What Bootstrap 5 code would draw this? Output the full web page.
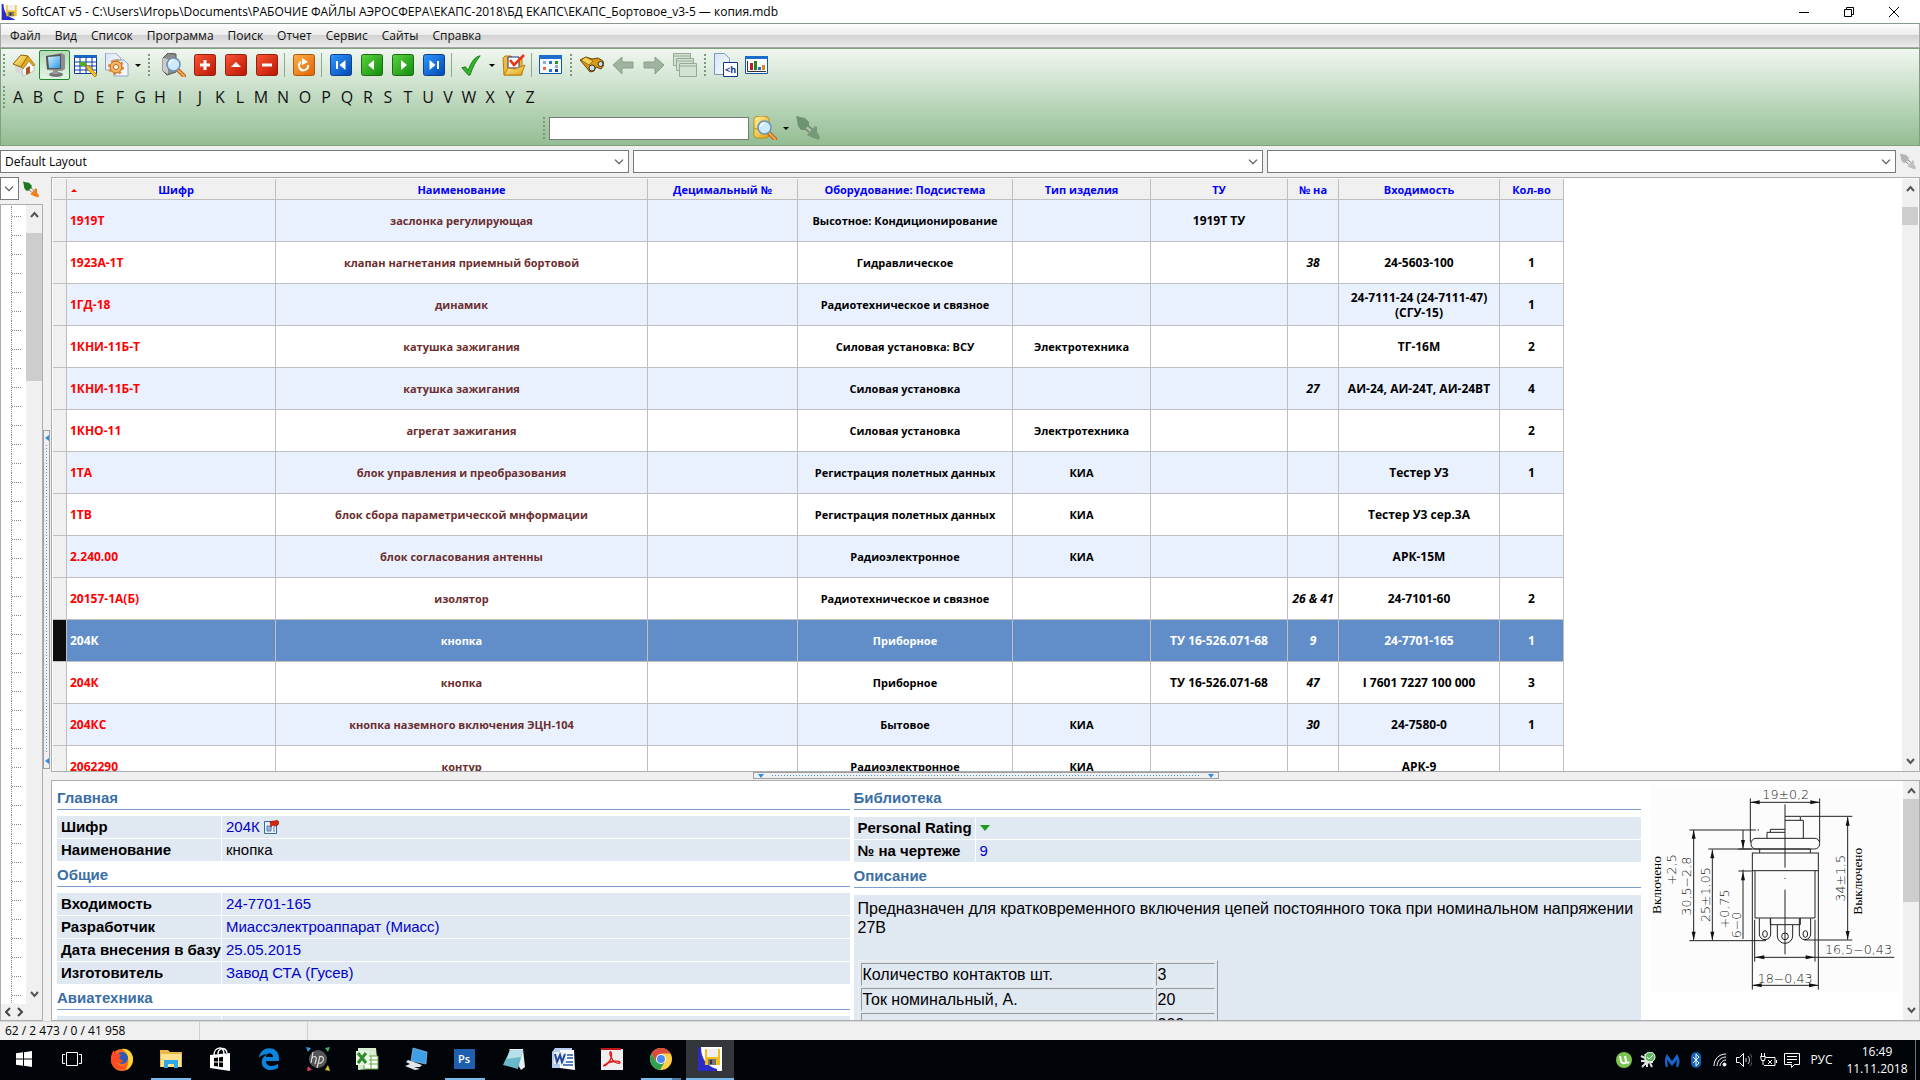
<!DOCTYPE html>
<html lang="ru">
<head>
<meta charset="utf-8">
<meta name="viewport" content="width=device-width, initial-scale=1">
<title>SoftCAT v5</title>
<link href="https://cdn.jsdelivr.net/npm/bootstrap@5.3.0/dist/css/bootstrap.min.css" rel="stylesheet">
<style>
:root{--line:#bfbfbf;--face:#f0f0f0;--edge:#abadb3;--ui:"Open Sans","Noto Sans",sans-serif;--doc:"Liberation Sans",Arial,sans-serif}
body{font:12px/16px var(--ui);color:#000;background:var(--face)}
button{font:inherit;color:inherit;background:none;border:0;padding:0}
a{text-decoration:none;color:inherit}
svg{display:block;flex:none}
.titlebar{height:23px;background:#fff}
.titlebar .winbtn{width:45px;height:22px}
.menubar{height:25px;border:1px solid #a5a8a5;border-top-color:#8b9a8b;background:linear-gradient(#fdfdfd 0,#ececec 48%,#d2d2d2 49%,#ececec 100%);padding-left:2px}
.menubar .nav-link{color:#111;padding:0 7px;line-height:23px}
.tools{height:98px;padding-top:1px;border:1px solid #7f9f7f;background:linear-gradient(#f0f7f0,#93bd93)}
.tbtn{width:31px;height:30px;display:flex;align-items:center;justify-content:center;border:1px solid transparent;border-radius:2px;flex:none}
.tbtn.on{border-color:#1f8a2d;background:linear-gradient(#b5dcb8,#e3f4e4)}
.drop{width:12px;display:flex;justify-content:center}
.drop::after{content:"";border:3px solid transparent;border-top-color:#000;border-bottom:0}
.grip{width:10px;height:22px;flex:none;background:repeating-linear-gradient(#7d977d 0 2px,transparent 2px 4px) 4px 0/2px 100% no-repeat}
.grip.lead-in{width:7px;background-position:2px 0}
.vsep{width:6px;height:24px;flex:none;background:linear-gradient(#93a893,#93a893) 2px 0/1px 100% no-repeat}
.abc{padding-top:5px}
.abc button{width:20px;font-size:16px;line-height:24px;color:#111}
.abc .wide{width:22px}
.finder{padding:4px 0 0 538px}
.find{width:200px;height:23px;border:1px solid #7a7a7a;border-radius:0;padding:0 4px;font-size:12px}
.combo{height:23px;min-height:0;border:1px solid #7a7a7a;border-radius:0;padding:0 20px 0 4px;font:12px/20px var(--ui);color:#000;background-color:#fff;background-size:10px 6px;background-position:right 4px center;background-image:url("data:image/svg+xml,%3Csvg xmlns='http://www.w3.org/2000/svg' viewBox='0 0 10 6'%3E%3Cpath d='M1 .7l4 4 4-4' fill='none' stroke='%23555' stroke-width='1.2'/%3E%3C/svg%3E")}
.combo.mini{width:19px;padding:0}
.framed{border:1px solid var(--edge);background:#fff}
main{min-height:0;flex:1 1 0}
.side{width:43px;flex:none}
.sb{width:16px;background:var(--face);flex:none}
.sb .thumb{background:#cdcdcd}
.sb .up{margin:4px auto 12px}
.sb .up.near{margin-bottom:2px}
.sb .down{margin:auto auto 4px}
.split-v{width:8px;padding:0 1px 0 0;flex:none}
.split-v div{width:7px;height:339px;border:1px solid #a0a0a0}
.split-h{height:8px;flex:none}
.split-h div{width:466px;height:7px;border:1px solid #a0a0a0;padding:0 4px}
.dots{height:1px;background:repeating-linear-gradient(90deg,#3d97ee 0 1px,transparent 1px 3px)}
.dots-v{width:1px;background:repeating-linear-gradient(#3d97ee 0 1px,transparent 1px 3px)}
.gridbox{padding:1px 1px 0}
.catalog{table-layout:fixed;width:1511px;border-collapse:separate;border-spacing:0;font:700 12px/15px var(--ui);text-align:center}
.catalog th,.catalog td{border:0 solid var(--line);border-width:0 1px 1px 0;padding:0 4px;overflow:hidden;white-space:nowrap}
.catalog th{height:21px;background:var(--face);color:#00f;font-size:11px;text-align:center}
.catalog td{height:42px}
.catalog tbody tr:nth-child(odd){background:#eaf1fe}
.catalog tr td:first-child{background:var(--face)}
.catalog td:nth-child(2){color:#f00;text-align:left;padding-left:3px}
.catalog td:nth-child(3){color:#6b2e2e}
.catalog td:nth-child(3),.catalog td:nth-child(5),.catalog td:nth-child(6){font-size:11px}
.catalog td:nth-child(8){font-style:italic;padding:0}
.catalog tbody tr.sel{background:#618ec9}
.catalog tr.sel td,.catalog tr.sel td:nth-child(2),.catalog tr.sel td:nth-child(3){color:#fff}
.catalog tr.sel td:first-child{background:#0d0d0d}
.sortup{float:left;border:3px solid transparent;border-bottom-color:#f00;border-top:0;margin:7px 4px 0 0}
.details{height:241px;font:15px/22px var(--doc);padding-left:5px}
.details h2{font:bold 15px/20px var(--doc);color:#3a6ea5;border-bottom:1px solid #7b9fcb;margin:0 0 6px;height:25px;padding-top:3px}
.details h2:first-child{height:25px}
.details .right h2{margin-bottom:7px}
.props{table-layout:fixed;width:100%;border-collapse:separate;border-spacing:0}
.props th,.props td{background:#e0e8f2;height:23px;padding:0 0 0 4px;border-bottom:1px solid #fff;line-height:22px;white-space:nowrap}
.props th{width:165px;border-right:1px solid #fff}
.props.narrow th{width:122px}
.props a{color:#0000c8}
.about{background:#e0e8f2;font:16px/19px var(--doc);padding:4px 4px 0;height:200px}
.specs{margin-top:23px;border:1px solid;border-color:#eee #999 #999 #eee;border-collapse:separate;border-spacing:2px;width:360px}
.specs td{border:1px solid;border-color:#999 #eee #eee #999;height:23px;padding:1px}
.status{height:19px;border-top:1px solid #d7d7d7;padding-left:5px;line-height:18px}
.status span+span{border-left:1px solid #d0d0d0}
.taskbar{height:40px;background:#010409;color:#fff}
.task{width:48px;height:40px;display:flex;align-items:center;justify-content:center;border-bottom:2px solid transparent;margin-left:1px;position:relative}
.task.open::after{content:"";position:absolute;left:4px;right:4px;bottom:-2px;height:2px;background:#76b9ed}
.task.two::after{background:linear-gradient(90deg,#76b9ed 31px,#4f7fa8 31px)}
.task.cur{background:#33373b;border-color:#76b9ed}
.task.sys{margin:0}
.task.sys+.task.sys{margin-right:1px}
.tray{padding-right:4px}
.tray button{width:24px;display:flex;justify-content:center}
.lang{width:35px}
.clock{width:76px;text-align:center;line-height:17px}
</style>
<script src="https://cdn.jsdelivr.net/npm/bootstrap@5.3.0/dist/js/bootstrap.bundle.min.js"></script>
</head>
<body class="d-flex flex-column vh-100 overflow-hidden">
<svg width="0" height="0" class="position-absolute" aria-hidden="true">
<defs>
<linearGradient id="gr" x1="0" y1="0" x2="1" y2="1"><stop offset="0" stop-color="#ff5436"/><stop offset="1" stop-color="#b81500"/></linearGradient>
<linearGradient id="gb" x1="0" y1="0" x2="1" y2="1"><stop offset="0" stop-color="#2f97ff"/><stop offset="1" stop-color="#0048b4"/></linearGradient>
<linearGradient id="gg" x1="0" y1="0" x2="1" y2="1"><stop offset="0" stop-color="#5bd53f"/><stop offset="1" stop-color="#128a0e"/></linearGradient>
<linearGradient id="go" x1="0" y1="0" x2="1" y2="1"><stop offset="0" stop-color="#ffb04a"/><stop offset="1" stop-color="#e06200"/></linearGradient>
<linearGradient id="gy" x1="0" y1="0" x2="1" y2="1"><stop offset="0" stop-color="#fff3a0"/><stop offset="1" stop-color="#e0a010"/></linearGradient>
<linearGradient id="gs" x1="0" y1="0" x2="1" y2="1"><stop offset="0" stop-color="#d6f1ff"/><stop offset="1" stop-color="#2d9be8"/></linearGradient>
<linearGradient id="gp" x1="0" y1="0" x2="1" y2="1"><stop offset="0" stop-color="#d5e2f7"/><stop offset="1" stop-color="#fff"/></linearGradient>
<symbol id="plug" viewBox="0 0 24 24"><path d="M11 9l5 4M8 12l5 4" stroke="#777" stroke-width="1.400"/><path d="M0 0l4 1 5 1 4 4 0 3-5 5-3 0-3-4-1-6z" fill="var(--a)"/><path d="M11 19l8-9 2 1 0 5 3 5-1 3-6-2z" fill="var(--b)"/></symbol>
<symbol id="lens" viewBox="0 0 24 24"><path d="M15 16l7 7" stroke="#b65a12" stroke-width="4" stroke-linecap="round"/><path d="M15 16l7 7" stroke="#f7a44c" stroke-width="2.400" stroke-linecap="round"/><circle cx="11.500" cy="11.500" r="6.500" fill="#cdeafd" stroke="#6e94b8" stroke-width="1.600"/><path d="M7.500 11a4 4 0 0 1 4-4" stroke="#fff" stroke-width="1.600" fill="none"/></symbol>
<symbol id="cat" viewBox="0 0 24 24"><path fill="#fff" d="M0 0h24v24H0z"/><path fill="#2b2bc8" d="M0 0h3c0 11 5 19 16 22v2H0z"/><path fill="#f5bd1c" d="M7 2h15v16H7z"/><path fill="#eee" d="M9 2h11v8H9z"/><path fill="#777" d="M10 12h8v6h-8z"/><path fill="#333" d="M12 13h2v4h-2z"/></symbol>
</defs></svg>

<header class="titlebar d-flex align-items-center flex-shrink-0">
<svg class="me-1" width="18" height="18" viewBox="-2 0 26 24"><use href="#cat" width="24" height="24"/></svg>
<span class="flex-grow-1">SoftCAT v5 - C:\Users\Игорь\Documents\РАБОЧИЕ ФАЙЛЫ АЭРОСФЕРА\ЕКАПС-2018\БД ЕКАПС\ЕКАПС_Бортовое_v3-5 — копия.mdb</span>
<button class="winbtn" aria-label="Свернуть"><svg class="mx-auto" width="10" height="10"><path d="M0 5.500h10" stroke="#000"/></svg></button>
<button class="winbtn" aria-label="Восстановить"><svg class="mx-auto" width="10" height="10" fill="none" stroke="#000"><path d="M.5 2.500h7v7h-7zM2.500 2V.5h7v7H8"/></svg></button>
<button class="winbtn me-1" aria-label="Закрыть"><svg class="mx-auto" width="10" height="10"><path d="M0 0l10 10M10 0L0 10" stroke="#000"/></svg></button>
</header>

<nav class="menubar nav flex-nowrap flex-shrink-0">
<a class="nav-link" href="#">Файл</a><a class="nav-link" href="#">Вид</a><a class="nav-link" href="#">Список</a><a class="nav-link" href="#">Программа</a><a class="nav-link" href="#">Поиск</a><a class="nav-link" href="#">Отчет</a><a class="nav-link" href="#">Сервис</a><a class="nav-link" href="#">Сайты</a><a class="nav-link" href="#">Справка</a>
</nav>

<div class="tools flex-shrink-0">
<div class="d-flex align-items-center">
<span class="grip lead-in"></span>
<button class="tbtn" aria-label="Домой"><svg width="24" height="24" viewBox="0 0 24 24"><path d="M3 12l8 3v8l-7-4z" fill="#d8d8d8"/><path d="M10 14l7-7 5 6v5l-11 5z" fill="#fafafa" stroke="#999" stroke-width=".5"/><path d="M1 11L9 2l7 1-7 11z" fill="url(#gy)" stroke="#8a6200"/><path d="M9 14l7-11 7 9-2 1-4-5-6 8z" fill="#e5a91a" stroke="#8a6200" stroke-width=".6"/><path d="M14 15l4-2v7l-4 2z" fill="#a45a22"/></svg></button>
<button class="tbtn on" aria-label="Экран"><svg width="24" height="24" viewBox="0 0 24 24"><ellipse cx="13" cy="21.500" rx="7" ry="2.500" fill="#777"/><path d="M10 16h5v5h-5z" fill="#999"/><path d="M3 3l16-3 3 2v14l-3 2-15-1z" fill="#8d8d8d"/><path d="M3 3l15-2v15l-14 0z" fill="#555"/><path d="M5 4l12-1v12l-11 0z" fill="url(#gs)"/></svg></button>
<button class="tbtn" aria-label="Таблица"><svg width="24" height="24" viewBox="0 0 24 24"><path fill="#fff" stroke="#0b3d9b" d="M.5 2.500h22v18H.5z"/><path fill="#1a66c8" d="M0 2h23v3H0z"/><path d="M0 9h23M0 13h23M0 17h23M6 4v16M12 4v16M18 4v16" stroke="#0b3d9b"/><path fill="#4caf20" d="M6 9h6v4H6z"/><path d="M12 12l3 1 8 9-2 2-8-8z" fill="#f4c025" stroke="#8f6a00" stroke-width=".7"/></svg></button>
<button class="tbtn" aria-label="Настройки"><svg width="24" height="24" viewBox="0 0 24 24"><path d="M.5 0h10l5 5v12H.5z" fill="url(#gp)" stroke="#8ba4cc"/><path d="M9 7h10l4 4v12H9z" fill="url(#gp)" stroke="#8ba4cc"/><circle cx="11" cy="14" r="6" fill="#f8b461" stroke="#ba6416"/><circle cx="11" cy="14" r="7" fill="none" stroke="#dd8a2e" stroke-width="2" stroke-dasharray="2.700 2.800"/><circle cx="11" cy="14" r="2.500" fill="#fff" stroke="#ba6416"/></svg></button><button class="drop" aria-label="Ещё"></button>
<span class="grip me-1"></span>
<button class="tbtn" aria-label="Найти"><svg width="24" height="24" viewBox="0 0 24 24"><path d="M1 5l5-5 8 1v18l-9 3-4-4z" fill="#8b8b8b" stroke="#555"/><path d="M1 5l5 1v15l-5-3z" fill="#ccc"/><use href="#lens" width="24" height="24"/></svg></button>
<button class="tbtn" aria-label="Добавить"><svg width="22" height="22" viewBox="0 0 22 22"><rect x=".5" y=".5" width="21" height="21" rx="2" fill="url(#gr)" stroke="#8f2312"/><path d="M11 6v10M6 11h10" stroke="#fff" stroke-width="3"/></svg></button>
<button class="tbtn" aria-label="Изменить"><svg width="22" height="22" viewBox="0 0 22 22"><rect x=".5" y=".5" width="21" height="21" rx="2" fill="url(#gr)" stroke="#8f2312"/><path d="M6 13l5-5 5 5z" fill="#fff"/></svg></button>
<button class="tbtn" aria-label="Удалить"><svg width="22" height="22" viewBox="0 0 22 22"><rect x=".5" y=".5" width="21" height="21" rx="2" fill="url(#gr)" stroke="#8f2312"/><path d="M6 11h10" stroke="#fff" stroke-width="3"/></svg></button>
<span class="vsep"></span>
<button class="tbtn" aria-label="Обновить"><svg width="22" height="22" viewBox="0 0 22 22"><rect x=".5" y=".5" width="21" height="21" rx="2" fill="url(#go)" stroke="#a85a10"/><path d="M8 8a4.500 4.500 0 1 0 7 3" fill="none" stroke="#fff" stroke-width="2.200"/><path d="M9 4l6 4-6 3z" fill="#fff"/></svg></button>
<span class="vsep"></span>
<button class="tbtn" aria-label="Первая"><svg width="22" height="22" viewBox="0 0 22 22"><rect x=".5" y=".5" width="21" height="21" rx="2" fill="url(#gb)" stroke="#123f85"/><path d="M6 7h2v8H6zM15.500 6v10l-6-5z" fill="#fff"/></svg></button>
<button class="tbtn" aria-label="Назад"><svg width="22" height="22" viewBox="0 0 22 22"><rect x=".5" y=".5" width="21" height="21" rx="2" fill="url(#gg)" stroke="#1c6a16"/><path d="M13 6v10l-6-5z" fill="#fff"/></svg></button>
<button class="tbtn" aria-label="Вперёд"><svg width="22" height="22" viewBox="0 0 22 22"><rect x=".5" y=".5" width="21" height="21" rx="2" fill="url(#gg)" stroke="#1c6a16"/><path d="M9 6v10l6-5z" fill="#fff"/></svg></button>
<button class="tbtn" aria-label="Последняя"><svg width="22" height="22" viewBox="0 0 22 22"><rect x=".5" y=".5" width="21" height="21" rx="2" fill="url(#gb)" stroke="#123f85"/><path d="M14 7h2v8h-2zM6.500 6v10l6-5z" fill="#fff"/></svg></button>
<span class="vsep"></span>
<button class="tbtn" aria-label="Отметить"><svg width="22" height="22" viewBox="0 0 24 24"><path d="M2 15l4-1 3 4C12 9 16 3 22 2c-5 6-8 12-11 21H9z" fill="#35b52a" stroke="#147a10"/></svg></button><button class="drop" aria-label="Ещё"></button>
<button class="tbtn" aria-label="Папка"><svg width="24" height="24" viewBox="0 0 24 24"><path d="M1 5l2-2h6l2 2h9v17H2z" fill="#f2bb3c" stroke="#b57f10"/><path d="M6 4h11v11H6z" fill="#fff" stroke="#14348a"/><path d="M2 22l4-7 7 1 10-4-4 10z" fill="url(#gy)" stroke="#b57f10"/><path d="M8 7l4 5 10-10" fill="none" stroke="#ee3412" stroke-width="2.600"/></svg></button>
<span class="vsep"></span>
<button class="tbtn" aria-label="Список"><svg width="24" height="24" viewBox="0 0 24 24"><path fill="#f4f9ff" stroke="#1256a5" d="M.5 3.500h22v17H.5z"/><path fill="#1b6ccc" d="M0 2h23v4H0z"/><path fill="#9aa8c0" d="M4 8h3v3H4zM16 12h3v3h-3z"/><path fill="#2c70d0" d="M10 8h3v3h-3zM10 16h3v3h-3z"/><path fill="#1a9a22" d="M16 8h3v3h-3z"/><path fill="#ee6a38" d="M4 14h3v3H4z"/><path fill="#223f8c" d="M16 16h3v3h-3z"/></svg></button>
<span class="grip"></span>
<button class="tbtn" aria-label="Бинокль"><svg width="24" height="24" viewBox="0 0 24 24"><path d="M0 7l6-3 6 2 6-1 5 3 1 4-3 4-5-2-2 4-4 1-4-5z" fill="#d89a18" stroke="#6a4200"/><path d="M1 7l5-3 7 4-4 4z" fill="#f6cf57" stroke="#6a4200" stroke-width=".6"/><circle cx="12" cy="15" r="3" fill="#bfe4fa" stroke="#4d3200"/><circle cx="20.500" cy="11" r="2.500" fill="#bfe4fa" stroke="#4d3200"/></svg></button>
<button class="tbtn" aria-label="Влево"><svg width="24" height="24" viewBox="0 0 24 24"><path d="M2 12l9-8v5h11v6H11v6z" fill="#9fb39f" stroke="#8aa08a"/></svg></button>
<button class="tbtn" aria-label="Вправо"><svg width="24" height="24" viewBox="0 0 24 24"><path d="M22 12l-9-8v5H2v6h11v6z" fill="#9fb39f" stroke="#8aa08a"/></svg></button>
<button class="tbtn" aria-label="Окна"><svg width="24" height="24" viewBox="0 0 24 24" fill="#d3e2d3" stroke="#94aa94"><path d="M.5.500h17v12H.5zM.5 3h17"/><path d="M3.500 5.500h17v12h-17zM3.500 8h17"/><path d="M6.500 10.500h17v13h-17zM6.500 13h17"/></svg></button>
<span class="grip"></span>
<button class="tbtn" aria-label="HTML"><svg width="24" height="24" viewBox="0 0 24 24"><path d="M.5.500h10l5 5v16H.5z" fill="url(#gp)" stroke="#7c96c4"/><path d="M9.500 9.500h14v14h-14z" fill="#fff" stroke="#14348a"/><text x="11" y="20" font-family="Open Sans" font-size="9" font-weight="700" fill="#14348a">&lt;h</text></svg></button>
<button class="tbtn" aria-label="Диаграмма"><svg width="24" height="24" viewBox="0 0 24 24"><path fill="#fff" stroke="#1256a5" d="M.5 3.500h22v17H.5z"/><path fill="#1b6ccc" d="M0 3h23v3H0z"/><path d="M2.500 8v10.500H21" fill="none" stroke="#333"/><path fill="#c2182c" d="M5 10h3v7H5z"/><path fill="#178a22" d="M9 8h3v9H9z"/><path fill="#3a62c0" d="M13 14h3v3h-3z"/><path fill="#d58a18" d="M17 12h3v5h-3z"/></svg></button>
</div>
<div class="abc d-flex align-items-center">
<span class="grip lead-in"></span>
<button>A</button><button>B</button><button>C</button><button class="wide">D</button><button>E</button><button>F</button><button>G</button><button>H</button><button>I</button><button>J</button><button>K</button><button>L</button><button class="wide">M</button><button class="wide">N</button><button class="wide">O</button><button>P</button><button class="wide">Q</button><button>R</button><button>S</button><button>T</button><button>U</button><button>V</button><button class="wide">W</button><button>X</button><button>Y</button><button>Z</button>
</div>
<div class="finder d-flex align-items-center">
<span class="grip"></span>
<input class="find form-control" type="text" aria-label="Поиск">
<button class="tbtn" aria-label="Искать"><svg width="24" height="24" viewBox="0 0 24 24"><path d="M1 3c0-4 15-4 15 0v17c0 3-15 3-15 0z" fill="url(#gy)" stroke="#b58a10"/><path d="M1 12c3 2 12 2 15 0" fill="none" stroke="#b58a10"/><use href="#lens" width="24" height="24"/></svg></button><button class="drop" aria-label="Ещё"></button>
<button class="tbtn" aria-label="Фильтр" style="--a:#6d9470;--b:#76997a"><svg width="24" height="24"><use href="#plug"/></svg></button>
</div>
</div>

<div class="d-flex gap-1 py-1 align-items-center flex-shrink-0">
<select class="combo form-select" aria-label="Макет"><option>Default Layout</option></select>
<select class="combo form-select" aria-label="Фильтр 1"><option></option></select>
<select class="combo form-select" aria-label="Фильтр 2"><option></option></select>
<button class="me-1" aria-label="Сбросить" style="--a:#b4b4b4;--b:#c0c0c0"><svg width="16" height="17"><use href="#plug"/></svg></button>
</div>

<main class="d-flex overflow-hidden">
<aside class="side d-flex flex-column">
<div class="d-flex align-items-start justify-content-between mb-1 pe-1">
<select class="combo mini form-select" aria-label="Дерево"><option></option></select>
<button class="pt-1" aria-label="Сбросить" style="--a:#1c7a1c;--b:#ee7f1c"><svg width="16" height="17"><use href="#plug"/></svg></button>
</div>
<div class="framed flex-grow-1 d-flex flex-column overflow-hidden">
<div class="d-flex flex-grow-1 overflow-hidden">
<svg class="flex-grow-1" width="24" height="100%"><defs><pattern id="tr" width="24" height="19" patternUnits="userSpaceOnUse" y="2"><path d="M11 9.500h9M10.500 0v19" stroke="#8a8a8a" stroke-dasharray="1 1"/></pattern></defs><rect width="24" height="100%" fill="url(#tr)"/></svg>
<div class="sb d-flex flex-column">
<svg class="up" width="9" height="12"><path d="M1 8l3.500-4L8 8" fill="none" stroke="#555" stroke-width="2"/></svg>
<div class="thumb" style="height:148px"></div>
<svg class="down" width="9" height="12"><path d="M1 4l3.500 4L8 4" fill="none" stroke="#555" stroke-width="2"/></svg>
</div>
</div>
<div class="sb w-auto ps-1"><svg width="24" height="16"><path d="M5 4L1 8l4 4M13 4l4 4-4 4" fill="none" stroke="#444" stroke-width="2"/></svg></div>
</div>
</aside>
<div class="split-v d-flex flex-column justify-content-center">
<div class="d-flex flex-column align-items-center py-1">
<svg width="4" height="6"><path d="M4 0v6L0 3z" fill="#2d8ceb"/></svg><i class="dots-v flex-grow-1 my-1"></i><svg width="4" height="6"><path d="M4 0v6L0 3z" fill="#2d8ceb"/></svg>
</div></div>

<section class="d-flex flex-column flex-grow-1 overflow-hidden">
<div class="framed gridbox d-flex flex-grow-1 overflow-hidden">
<div class="flex-grow-1 overflow-hidden">
<table class="catalog">
<colgroup><col style="width:14px"><col style="width:209px"><col style="width:372px"><col style="width:150px"><col style="width:215px"><col style="width:138px"><col style="width:137px"><col style="width:51px"><col style="width:161px"><col style="width:64px"></colgroup>
<thead><tr><th></th><th><i class="sortup"></i>Шифр</th><th>Наименование</th><th>Децимальный №</th><th>Оборудование: Подсистема</th><th>Тип изделия</th><th>ТУ</th><th>№ на</th><th>Входимость</th><th>Кол-во</th></tr></thead>
<tbody>
<tr><td></td><td>1919Т</td><td>заслонка регулирующая</td><td></td><td>Высотное: Кондиционирование</td><td></td><td>1919Т ТУ</td><td></td><td></td><td></td></tr>
<tr><td></td><td>1923А-1Т</td><td>клапан нагнетания приемный бортовой</td><td></td><td>Гидравлическое</td><td></td><td></td><td>38</td><td>24-5603-100</td><td>1</td></tr>
<tr><td></td><td>1ГД-18</td><td>динамик</td><td></td><td>Радиотехническое и связное</td><td></td><td></td><td></td><td>24-7111-24 (24-7111-47)<br>(СГУ-15)</td><td>1</td></tr>
<tr><td></td><td>1КНИ-11Б-Т</td><td>катушка зажигания</td><td></td><td>Силовая установка: ВСУ</td><td>Электротехника</td><td></td><td></td><td>ТГ-16М</td><td>2</td></tr>
<tr><td></td><td>1КНИ-11Б-Т</td><td>катушка зажигания</td><td></td><td>Силовая установка</td><td></td><td></td><td>27</td><td>АИ-24, АИ-24Т, АИ-24ВТ</td><td>4</td></tr>
<tr><td></td><td>1КНО-11</td><td>агрегат зажигания</td><td></td><td>Силовая установка</td><td>Электротехника</td><td></td><td></td><td></td><td>2</td></tr>
<tr><td></td><td>1ТА</td><td>блок управления и преобразования</td><td></td><td>Регистрация полетных данных</td><td>КИА</td><td></td><td></td><td>Тестер У3</td><td>1</td></tr>
<tr><td></td><td>1ТВ</td><td>блок сбора параметрической мнформации</td><td></td><td>Регистрация полетных данных</td><td>КИА</td><td></td><td></td><td>Тестер У3 сер.3А</td><td></td></tr>
<tr><td></td><td>2.240.00</td><td>блок согласования антенны</td><td></td><td>Радиоэлектронное</td><td>КИА</td><td></td><td></td><td>АРК-15М</td><td></td></tr>
<tr><td></td><td>20157-1А(Б)</td><td>изолятор</td><td></td><td>Радиотехническое и связное</td><td></td><td></td><td>26 &amp; 41</td><td>24-7101-60</td><td>2</td></tr>
<tr class="sel"><td></td><td>204К</td><td>кнопка</td><td></td><td>Приборное</td><td></td><td>ТУ 16-526.071-68</td><td>9</td><td>24-7701-165</td><td>1</td></tr>
<tr><td></td><td>204К</td><td>кнопка</td><td></td><td>Приборное</td><td></td><td>ТУ 16-526.071-68</td><td>47</td><td>I 7601 7227 100 000</td><td>3</td></tr>
<tr><td></td><td>204КС</td><td>кнопка наземного включения ЭЦН-104</td><td></td><td>Бытовое</td><td>КИА</td><td></td><td>30</td><td>24-7580-0</td><td>1</td></tr>
<tr><td></td><td>2062290</td><td>контур</td><td></td><td>Радиоэлектронное</td><td>КИА</td><td></td><td></td><td>АРК-9</td><td></td></tr>
</tbody></table>
</div>
<div class="sb d-flex flex-column">
<svg class="up" width="9" height="12"><path d="M1 8l3.500-4L8 8" fill="none" stroke="#555" stroke-width="2"/></svg>
<div class="thumb" style="height:18px"></div>
<svg class="down" width="9" height="12"><path d="M1 4l3.500 4L8 4" fill="none" stroke="#555" stroke-width="2"/></svg>
</div>
</div>

<div class="split-h d-flex justify-content-center"><div class="d-flex align-items-center">
<svg width="6" height="4"><path d="M0 0h6L3 4z" fill="#2d8ceb"/></svg><i class="dots flex-grow-1 mx-2"></i><svg width="6" height="4"><path d="M0 0h6L3 4z" fill="#2d8ceb"/></svg>
</div></div>

<div class="details framed d-flex flex-shrink-0 overflow-hidden">
<div class="d-flex flex-grow-1 gap-1 pt-1">
<div style="flex:793 1 0;min-width:0">
<h2>Главная</h2>
<table class="props"><tr><th>Шифр</th><td><div class="d-flex align-items-center"><a href="#">204К</a><svg class="ms-1" width="15" height="15" viewBox="0 0 15 15"><path d="M.5 1.500h12v12H.5z" fill="#e8f1fb" stroke="#3b66a0"/><path d="M3 6h4v5H3zM9 7h2M9 9h2M9 11h2" fill="#9cb6d8" stroke="#5d7fae"/><path d="M6 2l3-1 2 0 2-1 2 2-1 3-3 1-2-1-2 2z" fill="#d8240e" stroke="#8c1404" stroke-width=".6"/></svg></div></td></tr>
<tr><th>Наименование</th><td>кнопка</td></tr></table>
<h2>Общие</h2>
<table class="props"><tr><th>Входимость</th><td><a href="#">24-7701-165</a></td></tr><tr><th>Разработчик</th><td><a href="#">Миассэлектроаппарат (Миасс)</a></td></tr><tr><th>Дата внесения в базу</th><td><a href="#">25.05.2015</a></td></tr><tr><th>Изготовитель</th><td><a href="#">Завод СТА (Гусев)</a></td></tr></table>
<h2>Авиатехника</h2>
<table class="props"><tr><th></th><td></td></tr></table>
</div>
<div class="right" style="flex:788 1 0;min-width:0">
<h2>Библиотека</h2>
<table class="props narrow"><tr><th>Personal Rating</th><td><button class="d-block" aria-label="Оценка"><svg width="10" height="6"><path d="M0 0h10L5 6z" fill="#1f9a1f"/></svg></button></td></tr><tr><th>№ на чертеже</th><td><a href="#">9</a></td></tr></table>
<h2>Описание</h2>
<div class="about">Предназначен для кратковременного включения цепей постоянного тока при номинальном напряжении 27В
<table class="specs"><tr><td>Количество контактов шт.</td><td style="width:59px">3</td></tr><tr><td>Ток номинальный, А.</td><td>20</td></tr><tr><td></td><td>200</td></tr></table></div>
</div>
</div>
<svg class="ms-2 me-1 mt-1" width="250" height="208" viewBox="144 76 750 624" fill="none" stroke="#222" stroke-width="3">
<path fill="#fcfcfc" stroke="none" d="M144 76h750v622H144z"/>
<path d="M448 128h208M448 116v132M656 116v132M552 134v190M552 390v194M552 355v3M552 170h46v12M552 182h55v54M600 170h154M740 172v368M508 218v-9h44M498 236v-18h54M265 211h200M470 211h4M426 211v56M426 330v208M278 211v331M322 268h130M334 270v272M265 543h230M412 334h40M476 268v12M628 268v12M412 268h216M462 334v141h180V334M508 475v20h90v-20M454 334v356M652 334v356M461 480v126M642 480v126M462 593h418M454 677h198M610 541h144"/>
<rect x="450" y="236" width="206" height="32" rx="15"/><rect x="454" y="280" width="198" height="53"/>
<path d="M475 476v47a17 17 0 0 0 34 0v-47M529 496v33a23 22 0 0 0 46 0v-33M595 476v47a17 17 0 0 0 34 0v-47"/><circle cx="552" cy="530" r="10"/><ellipse cx="492" cy="523" rx="7" ry="10"/><ellipse cx="613" cy="523" rx="7" ry="10"/>
<path stroke="none" fill="#111" d="M448 128l28-6v12zM656 128l-28-6v12zM740 172l-6 26h12zM740 540l-6-26h12zM278 211l-6 26h12zM278 542l-6-26h12zM334 270l-6 26h12zM334 542l-6-26h12zM426 267l-6-26h12zM426 336l-6 26h12zM462 593l28-6v12zM642 593l-28-6v12zM454 677l28-6v12zM652 677l-28-6v12z"/>
<g fill="#222" stroke="none" font-family="DejaVu Sans Light, DejaVu Sans, sans-serif" font-weight="200" font-size="38">
<text x="484" y="118">19±0,2</text><text x="672" y="582">16,5−0,43</text><text x="470" y="671">18−0,43</text>
<text transform="translate(226 376) rotate(-90)">+2,5</text><text transform="translate(269 468) rotate(-90)">30,5−2,8</text><text transform="translate(326 487) rotate(-90)">25±1,05</text><text transform="translate(384 506) rotate(-90)">+0,75</text><text transform="translate(419 536) rotate(-90)">6−0</text><text transform="translate(731 426) rotate(-90)">34±1,5</text>
<g font-family="Liberation Serif, serif" font-weight="400" font-size="40" fill="#000"><text transform="translate(180 463) rotate(-90)">Включено</text><text transform="translate(782 465) rotate(-90)">Выключено</text></g></g>
</svg>
<div class="sb d-flex flex-column me-0">
<svg class="up near" width="9" height="12"><path d="M1 8l3.500-4L8 8" fill="none" stroke="#555" stroke-width="2"/></svg>
<div class="thumb" style="height:103px"></div>
<svg class="down" width="9" height="12"><path d="M1 4l3.500 4L8 4" fill="none" stroke="#555" stroke-width="2"/></svg>
</div>
</div>
</section>
</main>

<div class="status d-flex flex-shrink-0"><span style="width:194px">62 / 2 473 / 0 / 41 958</span><span style="width:108px"></span><span></span></div>

<footer class="taskbar d-flex flex-shrink-0 align-items-center">
<button class="task sys" aria-label="Пуск"><svg width="16" height="16" fill="#fff"><path d="M0 2.300L7 1.300V7.500H0zM8 1.200L16 0v7.500H8zM0 8.500h7v6.200l-7-1zM8 8.500h8V16l-8-1.200z"/></svg></button>
<button class="task sys" aria-label="Представление задач"><svg width="20" height="16" fill="none" stroke="#fff"><path d="M4.500 1.500h11v13h-11zM3 3.500H.5v9H3M17 3.500h2.500v9H17"/></svg></button>
<button class="task" aria-label="Firefox"><svg width="24" height="24" viewBox="0 0 24 24"><circle cx="12" cy="13" r="11" fill="#ff6a1c"/><path d="M12 2c6-1 11 4 11 10 0 5-3 9-7 11 4-8 3-16-4-21z" fill="#ffd52e"/><circle cx="12" cy="11" r="6" fill="#2b5bb8"/><path d="M1 12C1 7 3 4 4 3c0 2 1 3 3 3l4 2-2 3 4 3c-2 3-6 3-8 0 2 6 8 7 12 4-3 7-16 5-16-6z" fill="#ff4b24"/></svg></button>
<button class="task open" aria-label="Проводник"><svg width="22" height="20" viewBox="0 0 22 20"><path d="M0 1h8l2 2h12v15H0z" fill="#e9b949"/><path d="M1 5h20v13H1z" fill="#ffe28f"/><path d="M4 19v-8h14v8h-4v-4H8v4z" fill="#2da9e8"/></svg></button>
<button class="task" aria-label="Магазин"><svg width="22" height="24" viewBox="0 0 22 24"><path d="M1 8l20-2v18L1 21z" fill="#fff"/><path d="M5 8c0-8 10-10 10-1M9 7c0-6 8-8 9-1" fill="none" stroke="#fff" stroke-width="1.500"/><path d="M5 11l4-.5v4H5zM10 10.400l4-.6v4.700h-4zM5 15.500h4v4l-4-.5zM10 15.500h4v4.800l-4-.6z" fill="#000"/></svg></button>
<button class="task" aria-label="Edge"><svg width="20" height="22" viewBox="0 0 20 22"><path d="M0 10C1-3 20-3 20 10v3H7c0 6 7 6 12 3v4C10 25 1 20 3 12c1-3 3-5 6-6-4 0-7 1-9 4zm7-1h7c0-5-7-5-7 0z" fill="#0a84dc" fill-rule="evenodd"/></svg></button>
<button class="task" aria-label="HP"><svg width="24" height="24" viewBox="0 0 24 24"><circle cx="12" cy="12" r="9" fill="#555"/><path d="M7 5L5 16M6 11c3-3 5-1 4 2l-1 4M14 9l-3 12M13 10c7-3 5 8-1 6" stroke="#ddd" stroke-width="1.200" fill="none"/><path fill="#3d9bd4" d="M0 0l5 1-3 4z"/><path fill="#3cb26a" d="M24 0l-5 1 3 4z"/><path fill="#d4405c" d="M1 24l1-5 4 4z"/><path fill="#d6c32c" d="M24 24l-5-1 3-5z"/></svg></button>
<button class="task" aria-label="Excel"><svg width="24" height="24" viewBox="0 0 24 24"><path d="M3 1h18l2 20-20 2z" fill="#d8edcf"/><path d="M9 9h14v13H9z" fill="#fff" stroke="#5fa33c"/><path d="M9 13h14M9 17h14M16 9v13" stroke="#5fa33c"/><path d="M1 4h13v14H1z" fill="#e6f5de"/><path d="M3 6l8 10M11 6L3 16" stroke="#2e8b2e" stroke-width="3"/></svg></button>
<button class="task" aria-label="Компьютер"><svg width="24" height="24" viewBox="0 0 24 24"><path d="M9 1l14 4-1 12-15-3z" fill="#3f9fe6" stroke="#9fd0f4" stroke-width=".6"/><path d="M4 13l14 5-2 2-6 0 6 2-5 1-10-4 5-2-4-2z" fill="#dfe6ec"/></svg></button>
<button class="task open" aria-label="Photoshop"><svg width="22" height="20"><rect width="21" height="20" fill="#1f5fb0"/><text x="4" y="14" font-family="Open Sans" font-size="11" font-weight="600" fill="#fff">Ps</text></svg></button>
<button class="task" aria-label="Блокнот"><svg width="24" height="24" viewBox="0 0 24 24"><path d="M7 2h14l2 18-4 3z" fill="#e8eef0"/><path d="M8 3h13l-5 19L1 18z" fill="#66b9c9"/><path d="M8 3h13l-2 7-14 2z" fill="#b8e0e8"/></svg></button>
<button class="task" aria-label="Word"><svg width="24" height="24" viewBox="0 0 24 24"><path d="M4 1h17v20H1V5z" fill="#b5cdf0"/><path d="M9 3h14l1 20-15-2z" fill="#fff"/><path d="M16 8h6M16 11h6M12 15h10M12 18h10" stroke="#2a56a8" stroke-width="1.600"/><path d="M3 5h12v12H3z" fill="#e5eefb"/><path d="M4 7l2 8 3-7 2 7 3-8" stroke="#23479a" stroke-width="2" fill="none"/></svg></button>
<button class="task" aria-label="Acrobat"><svg width="22" height="22" viewBox="0 0 22 22"><path d="M0 1h22v21H0z" fill="#eee"/><path d="M0 0h20v2H0z" fill="#c21818"/><path d="M3 18c5-2 9-9 7-14-1-1-2 1 0 5 2 5 6 7 9 6 1-3-10-2-14 1-2 1-3 2-2 2z" fill="none" stroke="#e01818" stroke-width="1.300"/></svg></button>
<button class="task open two" aria-label="Chrome"><svg width="22" height="22" viewBox="0 0 22 22"><circle cx="11" cy="11" r="11" fill="#ffcf44"/><path d="M1.500 5.500A11 11 0 0 1 20.500 5.500H11l-5 8z" fill="#dd4b3e"/><path d="M1.500 5.500A11 11 0 0 0 10 22l5-8.500-9 0z" fill="#2da150"/><circle cx="11" cy="11" r="5" fill="#fff"/><circle cx="11" cy="11" r="4" fill="#4a8af4"/></svg></button>
<button class="task cur" aria-label="SoftCAT"><svg width="24" height="24"><use href="#cat"/></svg></button>

<div class="tray d-flex align-items-center ms-auto">
<button aria-label="uTorrent"><svg width="16" height="16"><circle cx="8" cy="8" r="8" fill="#7cc450"/><path d="M4 4l1 5c1 3 5 3 5 0L9 4l1 5c0 2 2 2 3 1" fill="none" stroke="#fff" stroke-width="2"/></svg></button>
<button aria-label="Обновления"><svg width="16" height="16"><path d="M1 4l4 2M1 9h4M2 15l4-4M7 15v-4M12 15l-2-4M13 10h-3M5 2l2 4" stroke="#ddd" stroke-width="2"/><circle cx="7" cy="9" r="3" fill="#ddd"/><circle cx="10" cy="5" r="5" fill="#5cb85c" stroke="#fff"/><path d="M7 5l2 2 4-4" stroke="#fff" fill="none"/></svg></button>
<button aria-label="Malwarebytes"><svg width="16" height="14"><path d="M2 14C0 9 1 4 3 1l5 7 5-7c2 3 4 8 1 13l-2 0 1-7-5 6-5-6 1 7z" fill="#1a62c8"/></svg></button>
<button aria-label="Bluetooth"><svg width="12" height="16"><rect x="1" width="10" height="16" rx="5" fill="#1264b8"/><path d="M3 5l6 6-3 3V2l3 3-6 6" fill="none" stroke="#fff"/></svg></button>
<button aria-label="Wi-Fi"><svg width="14" height="14" fill="none" stroke="#fff"><path d="M1 13C1 6 6 1 13 1M4 13c0-5 4-9 9-9M7 13c0-3 3-6 6-6"/><circle cx="11.500" cy="11.500" r="1.500" fill="#fff"/></svg></button>
<button aria-label="Громкость"><svg width="16" height="14" fill="none" stroke="#fff"><path d="M.5 4.500h3l4-4v13l-4-4h-3z"/><path d="M10 5v4M12 3c2 2 2 6 0 8" opacity=".8"/><path d="M14 1c3 3 3 9 0 12" opacity=".4"/></svg></button>
<button aria-label="Питание"><svg width="17" height="14" fill="none" stroke="#fff"><path d="M6 4.500h9v8H4M16.500 7v3M8 7l4 4M12 7l-4 4M1.500 0v3M4.500 0v3M.5 3.500h5l-1 4h-3zM3 8v4"/></svg></button>
<button aria-label="Уведомления"><svg width="17" height="17" fill="none" stroke="#fff"><path d="M.5 1.500h15v11h-5l-3 3v-3h-7zM3 4.500h10M3 7.500h10M3 10.500h5"/></svg></button>
<span class="lang text-center">РУС</span>
<time class="clock">16:49<br>11.11.2018</time>
<span class="border-start border-secondary" style="height:40px"></span>
</div>
</footer>
</body>
</html>
